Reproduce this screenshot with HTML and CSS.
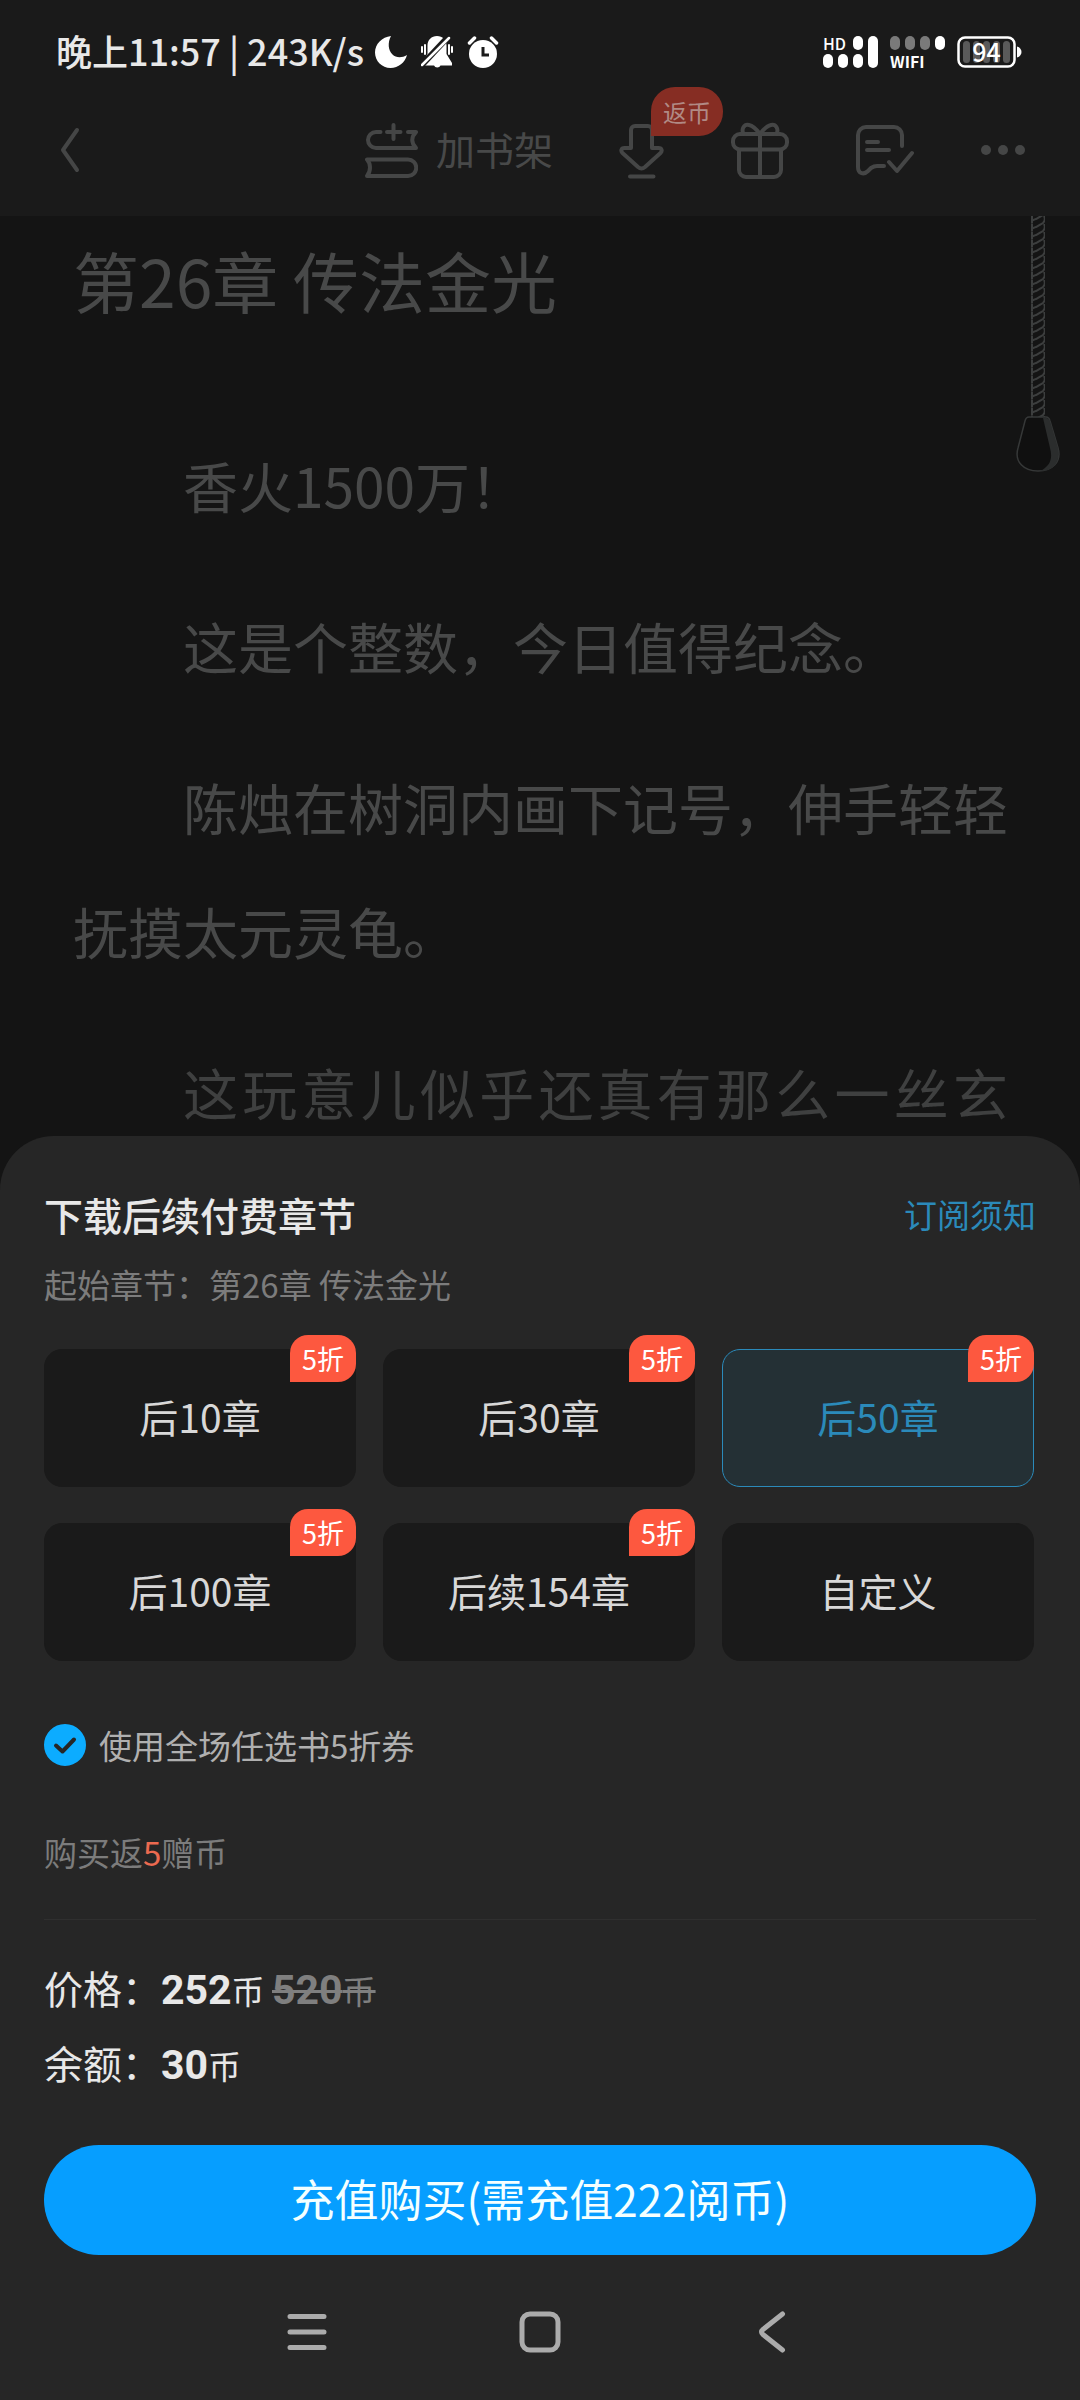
FILE: index.html
```html
<!DOCTYPE html>
<html lang="zh-CN">
<head>
<meta charset="utf-8">
<meta name="viewport" content="width=device-width, initial-scale=1">
<title>第26章 传法金光</title>
<link rel="stylesheet" href="styles.css">
</head>
<body>
<header class="top">
  <div class="status">
    <span class="status-text">晚上11:57 | 243K/s</span>
    <div class="status-icons">
      <svg width="32" height="32" viewBox="0 0 32 32" fill="#fff" aria-hidden="true"><path d="M16 0C7 1 0 8 0 16.500C0 25 7 32 15.500 32C23.500 32 30 26.500 32 19C27 22 21 22 17.500 18.500C13 14.500 12.500 6.500 16 0Z"/></svg>
      <svg width="32" height="32" viewBox="0 0 32 32" aria-hidden="true"><path fill="#fff" d="M16 0C10.500 0 6.500 4 6.500 9.500V18L1.500 27V29.500H13A3.500 3 0 0 0 19.500 29.500H31V27L25.500 18V9.500C25.500 4 21.500 0 16 0Z"/><path stroke="#fff" stroke-width="2" stroke-linecap="round" d="M1 11V16M4 9V18M28 9V18M31 11V16"/><path stroke="#1a1a1a" stroke-width="6" d="M0 30L28 0"/><path stroke="#fff" stroke-width="2.500" stroke-linecap="round" d="M1 29L28 2"/></svg>
      <svg width="32" height="32" viewBox="0 0 32 32" aria-hidden="true"><circle cx="16" cy="18" r="14" fill="#fff"/><path fill="none" stroke="#fff" stroke-width="3.500" stroke-linecap="round" d="M2.500 7L7.500 2M29.500 7L24.500 2"/><path fill="none" stroke="#1a1a1a" stroke-width="3" d="M16 11V19H22"/></svg>
    </div>
    <div class="status-right">
      <div class="signal">
        <span class="tiny">HD</span><i></i><i class="tall"></i>
        <i></i><i></i><i></i>
      </div>
      <div class="wifi">
        <div class="pills"><i class="dim"></i><i class="dim"></i><i class="dim"></i><i></i></div>
        <span class="tiny tiny-bold">WIFI</span>
      </div>
      <div class="battery">
        <svg width="65" height="34" viewBox="0 0 65 34" aria-hidden="true"><rect x="1.500" y="2.500" width="56" height="29" rx="6.500" fill="none" stroke="#fff" stroke-width="2.500"/><path fill="#fff" d="M60 11.500C66 13 66 21 60 22.500Z"/><g fill="#5a5a5a"><rect x="6" y="6" width="7" height="22" rx="3.500"/><rect x="16" y="6" width="7" height="22" rx="3.500"/><rect x="26" y="6" width="7" height="22" rx="3.500"/><rect x="36" y="6" width="7" height="22" rx="3.500"/><rect x="46" y="6" width="7" height="22" rx="3.500"/></g></svg>
        <span>94</span>
      </div>
    </div>
  </div>
  <nav class="toolbar">
    <button class="tool" aria-label="返回"><svg width="20" height="46" viewBox="0 0 20 46"><path d="M17 3L3 23L17 43"/></svg></button>
    <div class="tools">
      <button class="tool shelf"><svg width="53" height="57" viewBox="0 0 53 57"><path d="M15.500 10H11A8 8 0 0 0 11 26H51C46 21 46 15 51 10H43M28.500 3V17M22 10H35.500M2 37.500H43A8 8 0 0 1 43 54H2C6 49 6 42 2 37.500Z"/></svg><span>加书架</span></button>
      <button class="tool download" aria-label="下载"><svg width="45" height="57" viewBox="0 0 45 57"><path d="M12 26V8A4 4 0 0 1 16 4H29A4 4 0 0 1 33 8V26H39.500C43 26 43.500 29 41.500 31L26 45Q22.500 48 19 45L3.500 31C1.500 29 2 26 5.500 26ZM11 54.500H34.500"/></svg><span class="coin-badge">返币</span></button>
      <button class="tool" aria-label="礼物"><svg width="60" height="57" viewBox="0 0 60 57"><rect x="3" y="12" width="54" height="15.500" rx="7"/><path d="M9 28V48A7 7 0 0 0 16 55H44A7 7 0 0 0 51 48V28M30 12V55M13.500 12C11 7 14 2 19 3C24 4 27 8 30 12C33 8 36 4 41 3C46 2 49 7 46.500 12"/></svg></button>
      <button class="tool" aria-label="批注"><svg width="58" height="53" viewBox="0 0 58 53"><path d="M46 22V11A8 8 0 0 0 38 3H10A8 8 0 0 0 2 11V43C2 50 8 51 12 47L15 44Q18 42 21 42H28M11 18H22M11 26H33M33 38L41 47L56 29"/></svg></button>
      <button class="tool" aria-label="更多"><svg class="dots" width="45" height="12" viewBox="0 0 45 12"><circle cx="6" cy="6" r="5"/><circle cx="23" cy="6" r="5"/><circle cx="40" cy="6" r="5"/></svg></button>
    </div>
  </nav>
</header>

<main class="reader">
  <h1>第26章 传法金光</h1>
  <p>香火1500万！</p>
  <p>这是个整数，今日值得纪念。</p>
  <p>陈烛在树洞内画下记号，伸手轻轻抚摸太元灵龟。</p>
  <p class="cut">这玩意儿似乎还真有那么一丝玄</p>
  <svg class="cord" width="44" height="258" viewBox="0 0 44 258" fill="none" aria-hidden="true">
    <defs><pattern id="rope" width="14" height="8" patternUnits="userSpaceOnUse" x="15"><path d="M1 7.500C0 4.500 2 4 5 3L12 -1M1 15.500C0 12.500 2 12 5 11L12 7C14 5 14 2 13 0M1 7.500V0" stroke="#3c3e3e" stroke-width="2"/></pattern></defs>
    <rect x="15" width="14" height="202" fill="url(#rope)"/>
    <path d="M13 201H30Q33 201 34 205L42 232C46 246 36 255 22 255C8 255 -2 246 2 232L9 205Q10 201 13 201Z" fill="#101010" stroke="#363838" stroke-width="1.500"/>
    <path d="M27 202Q32 201 34 205L42 232C45 246 37 255 24 255C34 250 37 243 34 232Z" fill="#2b2d2d"/>
  </svg>
</main>

<section class="sheet" role="dialog" aria-labelledby="sheet-title">
  <div class="sheet-head">
    <h2 id="sheet-title">下载后续付费章节</h2>
    <a href="#">订阅须知</a>
  </div>
  <p class="start">起始章节：第26章 传法金光</p>
  <div class="options">
    <button class="option">后10章<span class="off">5折</span></button>
    <button class="option">后30章<span class="off">5折</span></button>
    <button class="option selected" aria-pressed="true">后50章<span class="off">5折</span></button>
    <button class="option">后100章<span class="off">5折</span></button>
    <button class="option">后续154章<span class="off">5折</span></button>
    <button class="option">自定义</button>
  </div>
  <label class="coupon">
    <span class="check"><input type="checkbox" checked><svg width="42" height="42" viewBox="0 0 42 42" aria-hidden="true"><path d="M12 21.500L18.500 27.500L30 15.500"/></svg></span>
    使用全场任选书5折券
  </label>
  <p class="bonus">购买返<em>5</em>赠币</p>
  <div class="totals">
    <p><span class="label">价格：</span><b>252</b>币 <del><b>520</b>币</del></p>
    <p><span class="label">余额：</span><b>30</b>币</p>
  </div>
  <button class="buy">充值购买(需充值222阅币)</button>
  <nav class="system">
    <button aria-label="最近任务"><svg width="42" height="42" viewBox="0 0 42 42"><path d="M4 5.500H38M4 21H38M4 36.500H38"/></svg></button>
    <button aria-label="主页"><svg width="42" height="42" viewBox="0 0 42 42"><rect x="3" y="3" width="36" height="36" rx="8"/></svg></button>
    <button aria-label="返回"><svg width="42" height="42" viewBox="0 0 42 42"><path d="M30.500 3L11 18.500Q8 21 11 23.500L30.500 39"/></svg></button>
  </nav>
</section>
</body>
</html>
```
FILE: styles.css
```css
* { box-sizing: border-box; margin: 0; padding: 0; }

body {
  min-height: 100vh;
  background: #141414;
  color: #484949;
  font-family: "Noto Sans CJK SC", "Noto Sans", sans-serif;
}

button {
  border: 0;
  background: none;
  color: inherit;
  font: inherit;
  cursor: pointer;
}

svg { display: block; }

/* Status bar and reader toolbar */
.top { background: #1a1a1a; }

.status {
  display: flex;
  align-items: center;
  height: 84px;
  padding: 19px 58px 0 56px;
  color: #e8e8e8;
}
.status-text { font-size: 36px; font-weight: 500; line-height: 40px; padding-bottom: 4px; }
.status-icons { display: flex; gap: 14px; margin-left: 11px; }
.status-right { display: flex; align-items: center; gap: 12px; margin-left: auto; color: #fff; }
.status-right i { width: 10px; height: 14px; border-radius: 5px; background: #fff; }
.status-right .dim { background: #7a7a7a; }
.signal {
  display: grid;
  grid-template-columns: repeat(4, 10px);
  grid-template-rows: 14px 14px;
  gap: 4px 5px;
}
.signal .tiny { grid-column: 1 / 3; }
.signal .tall { grid-area: 1 / 4 / 3 / 5; height: 32px; }
.wifi { display: grid; gap: 4px; }
.pills { display: flex; gap: 5px; }
.tiny { font-size: 16px; font-weight: 500; line-height: 14px; }
.tiny-bold { font-weight: 700; }
.battery { display: grid; }
.battery > * { grid-area: 1 / 1; }
.battery span {
  width: 59px;
  font-size: 25px;
  font-weight: 500;
  line-height: 32px;
  text-align: center;
}

.toolbar {
  display: flex;
  align-items: center;
  justify-content: space-between;
  height: 132px;
  padding: 0 55px 0 60px;
}
.tools { display: flex; align-items: center; gap: 66px; }
.tool { position: relative; display: flex; align-items: center; }
.tool svg {
  fill: none;
  stroke: #454646;
  stroke-width: 4;
  stroke-linecap: round;
  stroke-linejoin: round;
}
.tool .dots { fill: #454646; stroke: none; }
.shelf { gap: 18px; font-size: 39px; line-height: 48px; }
.shelf span { padding-bottom: 4px; }
.coin-badge {
  position: absolute;
  left: 32px;
  top: -35px;
  padding: 0 12px;
  border-radius: 24px 24px 24px 0;
  background: #862d23;
  color: #b18a85;
  font-size: 24px;
  line-height: 49px;
  white-space: nowrap;
}

/* Chapter text */
.reader { position: relative; padding: 18px 72px 0 73px; }
.reader h1 {
  margin-bottom: 98px;
  font-size: 66px;
  font-weight: 400;
  line-height: 90px;
}
.reader p {
  margin-bottom: 37px;
  font-size: 55px;
  line-height: 124px;
  text-indent: 2em;
}
.reader .cut { color: #3f4040; text-align-last: justify; }
.cord { position: absolute; top: 0; right: 20px; }

/* Purchase sheet */
.sheet {
  position: fixed;
  left: 0;
  right: 0;
  bottom: 0;
  display: flex;
  flex-direction: column;
  padding: 51px 44px 0;
  border-radius: 54px 54px 0 0;
  background: #262626;
  color: #e8e8e8;
}
.sheet-head { display: flex; align-items: center; justify-content: space-between; }
.sheet-head h2 { font-size: 39px; font-weight: 500; line-height: 54px; }
.sheet-head a { color: #2b8aba; font-size: 33px; line-height: 48px; text-decoration: none; }
.start { margin-top: 19px; color: #7c7c7c; font-size: 33px; line-height: 48px; }

.options {
  display: grid;
  grid-template-columns: repeat(3, 1fr);
  gap: 36px 27px;
  margin-top: 41px;
  padding-right: 2px;
}
.option {
  position: relative;
  height: 138px;
  padding-bottom: 4px;
  border: 1px solid #1a1a1a;
  border-radius: 18px;
  background: #1a1a1a;
  color: #d8d8d8;
  font-size: 39px;
}
.selected { border-color: #2b8aba; background: #243035; color: #2b8aba; }
.off {
  position: absolute;
  top: -15px;
  right: -1px;
  padding: 0 12px;
  border-radius: 18px 18px 18px 0;
  background: #fd583f;
  color: #fff;
  font-size: 27px;
  line-height: 47px;
}

.coupon {
  display: flex;
  align-items: center;
  gap: 13px;
  margin-top: 60px;
  color: #b0b0b0;
  font-size: 33px;
  line-height: 48px;
}
.check { display: grid; }
.check > * { grid-area: 1 / 1; }
.check input {
  width: 42px;
  height: 42px;
  appearance: none;
  border: 2px solid #7c7c7c;
  border-radius: 50%;
}
.check input:checked { border-color: #0cacff; background: #0cacff; }
.check svg {
  fill: none;
  stroke: #262626;
  stroke-width: 4;
  stroke-linecap: round;
  stroke-linejoin: round;
  pointer-events: none;
}
.check input:not(:checked) + svg { visibility: hidden; }

.bonus { margin-top: 59px; color: #7c7c7c; font-size: 33px; line-height: 48px; }
.bonus em { color: #ec6a50; font-style: normal; }

.totals { margin-top: 43px; padding: 31px 0 44px; border-top: 1px solid #2f2f2f; font-size: 33px; }
.totals p { line-height: 72px; }
.totals .label { font-size: 39px; }
.totals b { font-family: Roboto, sans-serif; font-size: 41px; font-weight: 700; }
.totals del { color: #7f7f7f; }

.buy {
  height: 110px;
  padding-bottom: 4px;
  border-radius: 55px;
  background: #069eff;
  color: #f4ffff;
  font-size: 44px;
}

.system { display: flex; justify-content: center; gap: 191px; padding: 56px 0 47px; }
.system svg {
  fill: none;
  stroke: #ababab;
  stroke-width: 5;
  stroke-linecap: round;
  stroke-linejoin: round;
}
```
